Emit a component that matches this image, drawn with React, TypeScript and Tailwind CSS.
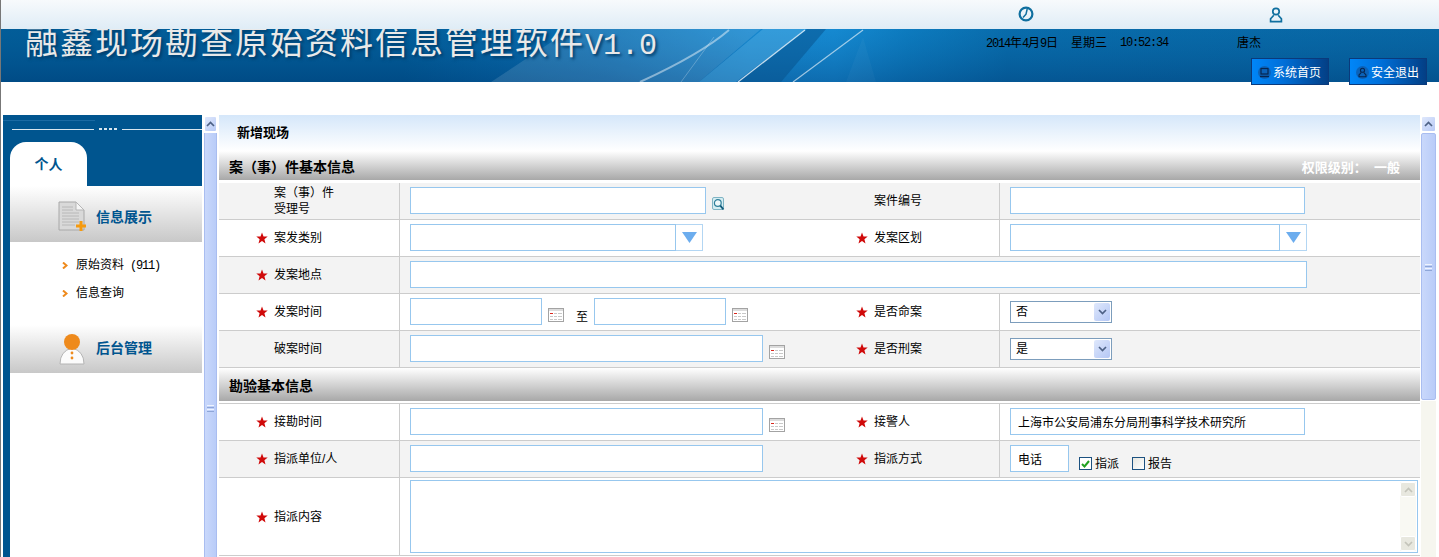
import type { ReactNode } from "react"

const cjk = "font-['Liberation_Sans','Noto_Sans_CJK_SC',sans-serif]"
const mono = "font-['Liberation_Mono',monospace] text-[12px] tracking-[-1.2px]"

function Star() {
    return (
        <svg viewBox="0 0 12 12" className="w-3 h-3 shrink-0">
            <polygon points="6,0.5 7.5,4.4 11.7,4.6 8.4,7.2 9.5,11.4 6,9 2.5,11.4 3.6,7.2 0.3,4.6 4.5,4.4" fill="#d00a0a" />
        </svg>
    )
}

function CalendarIcon() {
    return (
        <svg viewBox="0 0 16 14" className="w-4 h-[14px] shrink-0">
            <rect x="0.5" y="0.5" width="15" height="13" fill="#fff" stroke="#a3a3a3" />
            <rect x="1" y="1" width="14" height="2" fill="#dcdcdc" />
            <rect x="2" y="5" width="3" height="1" fill="#d9261c" />
            <path d="M6 5.5h3M10 5.5h4M2 8.5h3M6 8.5h3M10 8.5h4M2 11.5h3M6 11.5h3M10 11.5h4" stroke="#c8c8c8" strokeWidth="1" />
        </svg>
    )
}

function SearchIcon() {
    return (
        <svg viewBox="0 0 13 14" className="w-[13px] h-[14px] shrink-0">
            <rect x="0.5" y="0.5" width="11" height="12" rx="1.5" fill="#d5edf2" stroke="#7fb4c4" />
            <circle cx="5.8" cy="6" r="3.4" fill="#eef8fa" stroke="#2f7f9a" strokeWidth="1.2" />
            <path d="M8.3 8.6 L11.5 12.5" stroke="#0f5a7a" strokeWidth="1.8" />
        </svg>
    )
}

function ClockIcon() {
    return (
        <svg viewBox="0 0 16 16" className="w-4 h-4">
            <circle cx="8" cy="8" r="6.4" fill="none" stroke="#0f6f9f" strokeWidth="2.2" />
            <path d="M9.2 3 L8 8.2 L5 11.5" fill="none" stroke="#0f6f9f" strokeWidth="1.5" />
        </svg>
    )
}

function UserIcon({ color = "#0f6f9f", size = "w-[14px] h-4" }: { color?: string; size?: string }) {
    return (
        <svg viewBox="0 0 14 16" className={size}>
            <circle cx="7" cy="4.5" r="3.2" fill="none" stroke={color} strokeWidth="1.7" />
            <path d="M4.8 8.2 L1.6 11.8 V14.6 H12.4 V11.8 L9.2 8.2" fill="none" stroke={color} strokeWidth="1.7" />
        </svg>
    )
}

function HeaderButton({ label, icon }: { label: string; icon: ReactNode }) {
    return (
        <div className="w-[78px] h-[27px] flex items-center pl-[6px] gap-[2px] pt-[2px] border border-[#0a3a7c] bg-[linear-gradient(90deg,#0086f8,#0070da_40%,#033f85)] text-white text-[12px]">
            <span className="w-[13px] h-[13px] rounded-full bg-[#0b62b8] flex items-center justify-center">{icon}</span>
            {label}
        </div>
    )
}

function ScrollButton() {
    return (
        <div className="h-[16px] rounded-[2px] border border-white bg-[linear-gradient(135deg,#dfe8fc,#b8caf6)] flex items-center justify-center">
            <svg viewBox="0 0 9 6" className="w-[9px] h-[6px]">
                <path d="M1 5 L4.5 1.5 L8 5" fill="none" stroke="#4d6185" strokeWidth="1.7" />
            </svg>
        </div>
    )
}

function Grip() {
    return (
        <div className="flex flex-col gap-[1px] w-[7px]">
            <span className="h-[1px] bg-[#eef3fe]" />
            <span className="h-[1px] bg-[#8ea6d8]" />
            <span className="h-[1px] bg-[#eef3fe]" />
            <span className="h-[1px] bg-[#8ea6d8]" />
        </div>
    )
}

function TextBox({ w, value = "" }: { w: string; value?: string }) {
    return (
        <input
            readOnly
            value={value}
            className={`${w} h-[27px] border border-[#97c7ee] bg-white px-[7px] text-[12px] text-black outline-none ${cjk}`}
        />
    )
}

function ComboBox({ w }: { w: string }) {
    return (
        <div className={`${w} h-[27px] flex bg-white`}>
            <div className="flex-1 border border-[#97c7ee]" />
            <div className="w-[27px] border border-l-0 border-[#b3d6f3] flex items-center justify-center">
                <svg viewBox="0 0 15 11" className="w-[15px] h-[11px]">
                    <polygon points="0,0 15,0 7.5,11" fill="#6cadee" />
                </svg>
            </div>
        </div>
    )
}

function SelectBox({ value }: { value: string }) {
    return (
        <div className="w-[102px] h-[22px] border border-[#7c9dbc] bg-white flex items-center justify-between pl-[5px] pr-[1px] text-[12px]">
            <span className="pt-[1px]">{value}</span>
            <div className="w-[16px] h-[18px] rounded-[2px] bg-[linear-gradient(135deg,#dfe8fc,#b4c7f5)] flex items-center justify-center">
                <svg viewBox="0 0 9 6" className="w-[9px] h-[6px]">
                    <path d="M1 1 L4.5 4.5 L8 1" fill="none" stroke="#4d6185" strokeWidth="1.7" />
                </svg>
            </div>
        </div>
    )
}

function Label({ text, required = true, lines, second }: { text?: string; required?: boolean; lines?: string[]; second?: boolean }) {
    return (
        <div className={`${second ? "w-[180px] pl-[36px]" : "w-[181px] pl-[37px]"} shrink-0 h-full flex items-center border-r border-[#cccccc]`}>
            <span className="w-[12px] mr-[6px] shrink-0">{required && <Star />}</span>
            {lines ? (
                <div className="leading-[16px]">
                    {lines.map((l) => (
                        <div key={l}>{l}</div>
                    ))}
                </div>
            ) : (
                text
            )}
        </div>
    )
}

function Row({ alt, h = "h-[37px]", children }: { alt?: boolean; h?: string; children: ReactNode }) {
    return <div className={`${h} flex items-center border-b border-[#cccccc] ${alt ? "bg-[#f3f3f3]" : "bg-white"}`}>{children}</div>
}

function Value({ w, children }: { w: string; children: ReactNode }) {
    return <div className={`${w} shrink-0 h-full flex items-center pl-[10px] pb-[1px]`}>{children}</div>
}

function SectionTitle({ title, right }: { title: string; right?: string }) {
    return (
        <div className="flex items-center justify-between bg-[linear-gradient(180deg,#ffffff,#a8a8a8)] pl-[10px] pr-[20px] h-full text-[14px] font-bold text-black">
            <span className="pt-[4px]">{title}</span>
            {right && <span className="text-white text-[13px] pt-[4px] whitespace-pre">{right}</span>}
        </div>
    )
}

const w1 = "w-[420px]"

export default function App() {
    return (
        <div className={`h-screen overflow-hidden bg-white border-l border-[#777777] text-[12px] text-black ${cjk}`}>
            {/* top strip */}
            <div className="relative z-10 h-[29px] bg-[linear-gradient(180deg,#f7fafc,#dfecf6)] flex">
                <div className="ml-[1017px] mt-[6px]"><ClockIcon /></div>
                <div className="ml-[235px] mt-[7px]"><UserIcon /></div>
            </div>

            {/* banner */}
            <div className="relative h-[53px] bg-[linear-gradient(90deg,#00558f,#00558f_28%,#0a6eb4_42%,#1a8ed8_52%,#1990da_58%,#0e7dc2_63%,#0869a8_70%,#07629f)]">
                <div className="absolute inset-0 overflow-hidden">
                    <svg width="1439" height="53" viewBox="0 0 1439 53" className="block">
                        <defs>
                            <linearGradient id="shade" x1="0" y1="0" x2="0" y2="1">
                                <stop offset="0" stopColor="#0a74b4" stopOpacity="0.25" />
                                <stop offset="1" stopColor="#003f7a" stopOpacity="0.45" />
                            </linearGradient>
                        </defs>
                        <rect width="1439" height="53" fill="url(#shade)" />
                        <polygon points="490,53 570,0 760,0 698,53" fill="#ffffff" opacity="0.12" />
                        <polygon points="698,53 762,0 805,0 735,53" fill="#6cc0ee" opacity="0.35" />
                        <polygon points="737,53 806,0 825,0 780,53" fill="#064f8a" opacity="0.5" />
                        <path d="M639 53 Q700 25 728 1" stroke="#ffffff" strokeWidth="2" opacity="0.45" fill="none" />
                        <path d="M737 53 L804 1" stroke="#ffffff" strokeWidth="1.2" opacity="0.75" fill="none" />
                        <path d="M792 53 L862 1" stroke="#ffffff" strokeWidth="1.2" opacity="0.6" fill="none" />
                        <path d="M680 53 L713 8" stroke="#ffffff" strokeWidth="1" opacity="0.25" fill="none" />
                        <path d="M845 53 L862 8 L875 53" fill="#ffffff" opacity="0.03" />
                    </svg>
                </div>
                <div className="relative flex">
                    <div className="pl-[24px] w-[985px] -mt-[5px] text-[33px] leading-[38px] tracking-[2px] whitespace-nowrap text-[#e9e9e9] [text-shadow:2px_2px_3px_#003a66]">
                        融鑫现场勘查原始资料信息管理软件<span className="font-['Liberation_Mono',monospace] text-[30px] tracking-normal">V1.0</span>
                    </div>
                    <div className="flex-1">
                        <div className="flex pt-[7px] leading-[14px] text-black">
                            <div className="w-[251px] flex gap-[13px]">
                                <span><span className={mono}>2014</span>年<span className={mono}>4</span>月<span className={mono}>9</span>日</span>
                                <span>星期三</span>
                                <span className={mono}>10:52:34</span>
                            </div>
                            <span>唐杰</span>
                        </div>
                        <div className="flex gap-[20px] pl-[265px] pt-[7px]">
                            <HeaderButton
                                label="系统首页"
                                icon={
                                    <svg viewBox="0 0 11 11" className="w-[11px] h-[11px]">
                                        <rect x="2" y="1.5" width="7" height="5.5" fill="none" stroke="#07264f" strokeWidth="1.2" />
                                        <path d="M1 9.5H10" stroke="#07264f" strokeWidth="1.4" />
                                    </svg>
                                }
                            />
                            <HeaderButton label="安全退出" icon={<UserIcon color="#07264f" size="w-[9px] h-[11px]" />} />
                        </div>
                    </div>
                </div>
            </div>

            {/* main area */}
            <div className="flex mt-[33px] ml-[2px] h-[442px]">
                {/* sidebar */}
                <aside className="w-[199px] shrink-0 bg-[#00558f] pl-[7px] flex flex-col">
                    <div className="h-[27px] pt-[5px] -ml-[7px]">
                        <div className="h-[1px] w-[92px] bg-[#1a6aa3]" />
                        <div className="flex items-center gap-[5px] mt-[7px] pl-[9px]">
                            <span className="h-[1px] w-[82px] bg-[#d9e6ef]" />
                            <span className="flex gap-[2px]">
                                <i className="w-[3px] h-[2px] bg-[#d9e6ef]" />
                                <i className="w-[3px] h-[2px] bg-[#d9e6ef]" />
                                <i className="w-[3px] h-[2px] bg-[#d9e6ef]" />
                                <i className="w-[3px] h-[2px] bg-[#d9e6ef]" />
                            </span>
                            <span className="h-[1px] flex-1 bg-[#d9e6ef]" />
                        </div>
                    </div>
                    <div className="w-[77px] h-[44px] rounded-t-[16px] bg-white flex items-center justify-center text-[14px] font-bold text-[#00558f]">
                        <span className="pt-[1px]">个人</span>
                    </div>
                    <div className="flex-1 bg-white">
                        <div className="h-[56px] bg-[linear-gradient(180deg,#ffffff,#c8c8c8)] flex items-center pl-[47px] pt-[6px] gap-[9px] text-[14px] font-bold text-[#00558f]">
                            <svg viewBox="0 0 30 32" className="w-[30px] h-[32px] shrink-0">
                                <path d="M2 1 H19 L27 9 V29 H2 Z" fill="#d9d9d9" stroke="#a8a8a8" />
                                <path d="M19 1 V9 H27 Z" fill="#f6f6f6" stroke="#b5b5b5" />
                                <path d="M5 6H16M5 9H16M5 12H22M5 15H22M5 18H22M5 21H22M5 24H18" stroke="#b8b8b8" strokeWidth="1" />
                                <path d="M24 20 V30 M19 25 H29" stroke="#f59a0e" strokeWidth="3" />
                            </svg>
                            信息展示
                        </div>
                        <div className="pl-[52px] pt-[9px] flex flex-col">
                            {[["原始资料", " (911)"], ["信息查询", ""]].map(([name, count]) => (
                                <div key={name} className="h-[28px] flex items-center gap-[8px]">
                                    <svg viewBox="0 0 6 7" className="w-[6px] h-[7px] shrink-0">
                                        <path d="M1 0.5 L4.5 3.5 L1 6.5" fill="none" stroke="#ee8a1c" strokeWidth="2" />
                                    </svg>
                                    <span className="whitespace-pre">{name}<span className={mono}>{count}</span></span>
                                </div>
                            ))}
                        </div>
                        <div className="mt-[18px] h-[48px] bg-[linear-gradient(180deg,#ffffff,#c8c8c8)] flex items-center pl-[47px] gap-[9px] text-[14px] font-bold text-[#00558f]">
                            <svg viewBox="0 0 30 33" className="w-[30px] h-[33px] shrink-0">
                                <path d="M3 31 Q3 18 15 15 Q27 18 27 31 Z" fill="#fbfbfb" stroke="#b4b4b4" />
                                <circle cx="15" cy="9" r="8" fill="#ee8a1c" />
                                <circle cx="15" cy="20" r="1.4" fill="#ee8a1c" />
                                <circle cx="15" cy="25" r="1.4" fill="#ee8a1c" />
                            </svg>
                            <span className="-mt-[2px]">后台管理</span>
                        </div>
                    </div>
                </aside>

                {/* splitter */}
                <div className="w-[15px] shrink-0 ml-[1px] px-[1px] pt-[1px] flex flex-col gap-[1px]">
                    <ScrollButton />
                    <div className="flex-1 border-x border-[#a9bdf0] bg-[linear-gradient(90deg,#c9d8fb,#b9ccf8)] flex justify-center pt-[272px]">
                        <Grip />
                    </div>
                </div>

                {/* form */}
                <main className="w-[1201px] shrink-0 ml-[1px]">
                    <div className="h-[36px] bg-[linear-gradient(180deg,#d5e7fa,#ffffff)] pl-[18px] pt-[11px] text-[13px] font-bold leading-[14px]">新增现场</div>
                    <div className="h-[29px]"><SectionTitle title="案（事）件基本信息" right="权限级别：  一般" /></div>
                    <div className="h-[3px]" />

                    <Row alt>
                        <Label required={false} lines={["案（事）件", "受理号"]} />
                        <Value w={w1}>
                            <TextBox w="w-[296px]" />
                            <span className="ml-[6px] mt-[7px]"><SearchIcon /></span>
                        </Value>
                        <Label second required={false} text="案件编号" />
                        <Value w="flex-1"><TextBox w="w-[295px]" /></Value>
                    </Row>
                    <Row>
                        <Label text="案发类别" />
                        <Value w={w1}><ComboBox w="w-[293px]" /></Value>
                        <Label second text="发案区划" />
                        <Value w="flex-1"><ComboBox w="w-[297px]" /></Value>
                    </Row>
                    <Row alt>
                        <Label text="发案地点" />
                        <Value w="flex-1"><TextBox w="w-[897px]" /></Value>
                    </Row>
                    <Row>
                        <Label text="发案时间" />
                        <Value w={w1}>
                            <TextBox w="w-[132px]" />
                            <span className="ml-[6px] mt-[6px]"><CalendarIcon /></span>
                            <span className="ml-[12px] mr-[6px] mt-[10px]">至</span>
                            <TextBox w="w-[132px]" />
                            <span className="ml-[6px] mt-[6px]"><CalendarIcon /></span>
                        </Value>
                        <Label second text="是否命案" />
                        <Value w="flex-1"><SelectBox value="否" /></Value>
                    </Row>
                    <Row alt>
                        <Label required={false} text="破案时间" />
                        <Value w={w1}>
                            <TextBox w="w-[353px]" />
                            <span className="ml-[6px] mt-[6px]"><CalendarIcon /></span>
                        </Value>
                        <Label second text="是否刑案" />
                        <Value w="flex-1"><SelectBox value="是" /></Value>
                    </Row>

                    <div className="h-[33px]"><SectionTitle title="勘验基本信息" /></div>
                    <div className="h-[3px] border-b border-[#cccccc]" />

                    <Row>
                        <Label text="接勘时间" />
                        <Value w={w1}>
                            <TextBox w="w-[353px]" />
                            <span className="ml-[6px] mt-[6px]"><CalendarIcon /></span>
                        </Value>
                        <Label second text="接警人" />
                        <Value w="flex-1"><TextBox w="w-[295px]" value="上海市公安局浦东分局刑事科学技术研究所" /></Value>
                    </Row>
                    <Row alt>
                        <Label text="指派单位/人" />
                        <Value w={w1}><TextBox w="w-[353px]" /></Value>
                        <Label second text="指派方式" />
                        <Value w="flex-1">
                            <TextBox w="w-[59px]" value="电话" />
                            <span className="ml-[10px] mt-[10px] flex items-center gap-[3px]">
                                <span className="w-[13px] h-[13px] border border-[#1c5180] bg-white flex items-center justify-center">
                                    <svg viewBox="0 0 9 8" className="w-[9px] h-[8px]">
                                        <path d="M1 4 L3.5 6.5 L8 1" fill="none" stroke="#21a121" strokeWidth="2" />
                                    </svg>
                                </span>
                                指派
                            </span>
                            <span className="ml-[13px] mt-[10px] flex items-center gap-[3px]">
                                <span className="w-[13px] h-[13px] border border-[#1c5180] bg-[linear-gradient(135deg,#e6e6e0,#ffffff)]" />
                                报告
                            </span>
                        </Value>
                    </Row>
                    <Row h="h-[78px]">
                        <Label text="指派内容" />
                        <div className="flex-1 h-full pl-[10px] pr-[2px] pt-[2px] pb-[2px]">
                            <div className="h-full border border-[#97c7ee] bg-white flex justify-end p-[1px]">
                                <div className="w-[16px] h-full bg-[#f9f9f3] flex flex-col justify-between">
                                    <div className="h-[15px] rounded-[2px] border border-white bg-[#e8e8df] flex items-center justify-center">
                                        <svg viewBox="0 0 9 6" className="w-[9px] h-[6px]"><path d="M1 5 L4.5 1.5 L8 5" fill="none" stroke="#c4c4ba" strokeWidth="1.7" /></svg>
                                    </div>
                                    <div className="h-[15px] rounded-[2px] border border-white bg-[#e8e8df] flex items-center justify-center">
                                        <svg viewBox="0 0 9 6" className="w-[9px] h-[6px]"><path d="M1 1 L4.5 4.5 L8 1" fill="none" stroke="#c4c4ba" strokeWidth="1.7" /></svg>
                                    </div>
                                </div>
                            </div>
                        </div>
                    </Row>
                </main>

                {/* page scrollbar */}
                <div className="w-[15px] shrink-0 ml-[1px] pt-[1px] flex flex-col gap-[1px]">
                    <ScrollButton />
                    <div className="h-[267px] rounded-[2px] border border-[#a9bdf0] bg-[linear-gradient(90deg,#c9d8fb,#b9ccf8)] flex justify-center pt-[130px]">
                        <Grip />
                    </div>
                    <div className="flex-1 bg-[#f6f6ef]" />
                </div>
            </div>
        </div>
    )
}
